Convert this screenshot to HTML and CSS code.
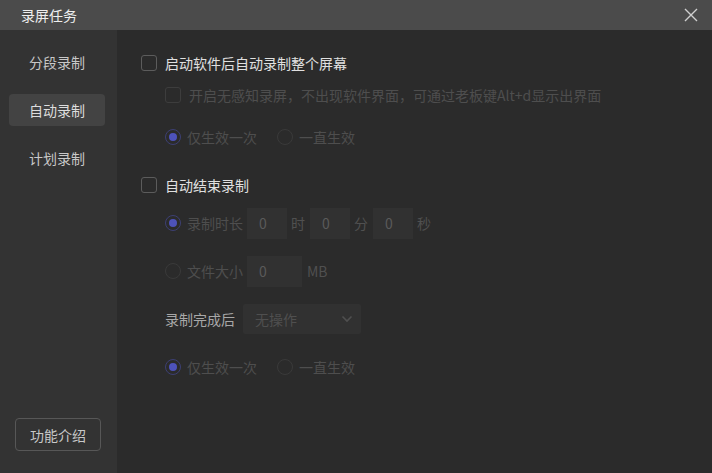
FILE: index.html
```html
<!DOCTYPE html>
<html lang="zh-CN">

<head>
    <meta charset="UTF-8">
    <meta name="viewport" content="width=device-width, initial-scale=1.0">
    <title>录屏任务</title>
    <link rel="stylesheet" href="styles.css">
</head>

<body>
    <div class="window">
        <div class="titlebar">
            <span class="title">录屏任务</span>
            <button class="close" aria-label="关闭">
                <svg width="14" height="14" viewBox="0 0 14 14">
                    <path d="M1 1 L13 13 M13 1 L1 13" stroke="#cfcfcf" stroke-width="1.4" fill="none" />
                </svg>
            </button>
        </div>
        <div class="content">
            <div class="sidebar">
                <div class="nav-item">分段录制</div>
                <div class="nav-item active">自动录制</div>
                <div class="nav-item">计划录制</div>
                <button class="intro">功能介绍</button>
            </div>
            <div class="main">
                <div class="row">
                    <span class="checkbox"></span>
                    <span class="label">启动软件后自动录制整个屏幕</span>
                </div>
                <div class="row sub">
                    <span class="checkbox disabled"></span>
                    <span class="label muted">开启无感知录屏，不出现软件界面，可通过老板键Alt+d显示出界面</span>
                </div>
                <div class="row sub gap-sm">
                    <span class="radio checked"></span>
                    <span class="label muted">仅生效一次</span>
                    <span class="radio second"></span>
                    <span class="label muted">一直生效</span>
                </div>

                <div class="row gap-lg">
                    <span class="checkbox"></span>
                    <span class="label">自动结束录制</span>
                </div>
                <div class="row sub gap-xs">
                    <span class="radio checked"></span>
                    <span class="label muted">录制时长</span>
                    <span class="field">0</span>
                    <span class="unit">时</span>
                    <span class="field">0</span>
                    <span class="unit">分</span>
                    <span class="field">0</span>
                    <span class="unit">秒</span>
                </div>
                <div class="row sub gap-lg">
                    <span class="radio"></span>
                    <span class="label muted">文件大小</span>
                    <span class="field wide">0</span>
                    <span class="unit mb">MB</span>
                </div>
                <div class="row sub gap-lg">
                    <span class="label dim">录制完成后</span>
                    <span class="select">
                        无操作
                        <svg width="12" height="8" viewBox="0 0 12 8">
                            <path d="M1.5 1.5 L6 6 L10.5 1.5" stroke="#4f4f4f" stroke-width="1.6" fill="none" />
                        </svg>
                    </span>
                </div>
                <div class="row sub gap-lg">
                    <span class="radio checked"></span>
                    <span class="label muted">仅生效一次</span>
                    <span class="radio second"></span>
                    <span class="label muted">一直生效</span>
                </div>
            </div>
        </div>
    </div>
</body>

</html>
```

FILE: styles.css
```css
body {
    margin: 0;
    font-family: "Noto Sans CJK SC", "Noto Sans", sans-serif;
    font-size: 14px;
    background-color: #2b2b2b;
}

.window {
    width: 712px;
    height: 473px;
    display: flex;
    flex-direction: column;
}

.titlebar {
    height: 30px;
    flex-shrink: 0;
    background-color: #4b4b4b;
    display: flex;
    align-items: center;
    justify-content: space-between;
    padding: 0 14px 0 21px;
}

.title {
    color: #eeeeee;
    font-size: 14px;
}

.close {
    background: none;
    border: none;
    padding: 0;
    width: 14px;
    height: 14px;
    display: flex;
    cursor: pointer;
}

.content {
    flex: 1;
    display: flex;
}

.sidebar {
    width: 117px;
    flex-shrink: 0;
    background-color: #333333;
    display: flex;
    flex-direction: column;
    gap: 16px;
    padding: 16px 0 22px;
    box-sizing: border-box;
}

.nav-item {
    height: 32px;
    margin: 0 12px 0 9px;
    border-radius: 4px;
    display: flex;
    align-items: center;
    justify-content: center;
    color: #c8c8c8;
    cursor: pointer;
}

.nav-item.active {
    background-color: #434343;
    color: #dddddd;
}

.intro {
    margin: auto 0 0 15px;
    width: 86px;
    height: 33px;
    background: transparent;
    border: 1px solid #575757;
    border-radius: 4px;
    color: #c8c8c8;
    font-family: inherit;
    font-size: 14px;
    cursor: pointer;
}

.main {
    flex: 1;
    padding: 17px 0 0 24px;
}

.row {
    height: 32px;
    display: flex;
    align-items: center;
}

.row.sub {
    padding-left: 24px;
}

.gap-xs {
    margin-top: 6px;
}

.gap-sm {
    margin-top: 10px;
}

.gap-lg {
    margin-top: 16px;
}

.checkbox {
    width: 16px;
    height: 16px;
    box-sizing: border-box;
    border: 1px solid #5c5c5c;
    border-radius: 3px;
    margin-right: 8px;
}

.checkbox.disabled {
    border-color: #3d3d3d;
}

.label {
    color: #e0e0e0;
}

.label.muted {
    color: #4e4e4e;
}

.label.dim {
    color: #a8a8a8;
    margin-right: 8px;
}

.radio {
    width: 16px;
    height: 16px;
    box-sizing: border-box;
    border: 1px solid #3a3a3a;
    border-radius: 50%;
    margin-right: 6px;
    display: flex;
    align-items: center;
    justify-content: center;
}

.radio.checked {
    border-color: #3c3f73;
}

.radio.checked::after {
    content: "";
    width: 8px;
    height: 8px;
    border-radius: 50%;
    background-color: #4d52ba;
}

.radio.second {
    margin-left: 20px;
}

.field {
    width: 40px;
    height: 31px;
    margin-left: 4px;
    background-color: #313131;
    color: #5a5a5a;
    display: flex;
    align-items: center;
    padding-left: 12px;
    box-sizing: border-box;
}

.field.wide {
    width: 55px;
}

.unit {
    color: #505050;
    margin: 0 1px 0 4px;
}

.unit.mb {
    margin-left: 5px;
}

.select {
    width: 118px;
    height: 30px;
    background-color: #313131;
    color: #4f4f4f;
    display: flex;
    align-items: center;
    justify-content: space-between;
    padding: 0 8px 0 12px;
    box-sizing: border-box;
    border-radius: 2px;
}
```
